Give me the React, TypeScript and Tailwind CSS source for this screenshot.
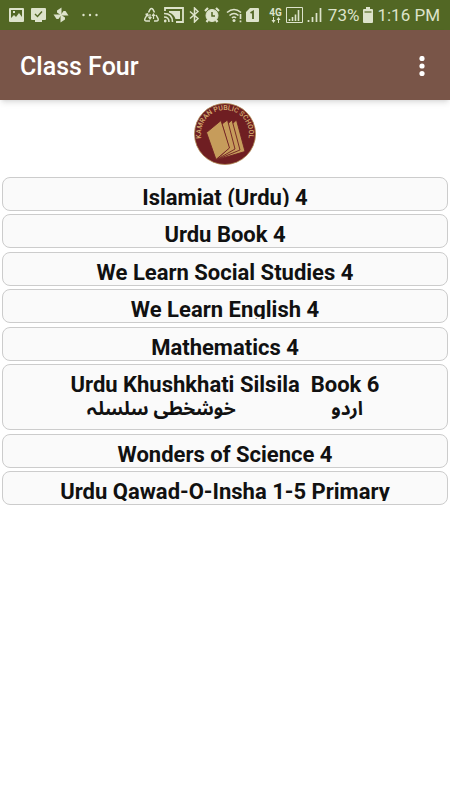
import type { ReactNode } from 'react';

interface Book {
  title: string;
  urdu?: string[];
}

const books: Book[] = [
  { title: 'Islamiat (Urdu) 4' },
  { title: 'Urdu Book 4' },
  { title: 'We Learn Social Studies 4' },
  { title: 'We Learn English 4' },
  { title: 'Mathematics 4' },
  { title: 'Urdu Khushkhati Silsila  Book 6', urdu: ['اردو', 'خوشخطی سلسلہ'] },
  { title: 'Wonders of Science 4' },
  { title: 'Urdu Qawad-O-Insha 1-5 Primary' },
];

function Icon({ width, children }: { width: number; children: ReactNode }) {
  return (
    <svg width={width} height="16" viewBox={`0 0 ${width} 16`} fill="none" stroke="currentColor" aria-hidden="true" className="shrink-0">
      {children}
    </svg>
  );
}

function StatusBar() {
  return (
    <div className="flex h-[30px] items-center justify-between bg-[#526724] pl-[9px] pr-[10px] text-[#dde3cb]">
      <div className="flex items-center gap-[7px]">
        <Icon width={15}>
          <path fill="currentColor" stroke="none" fillRule="evenodd" d="M1 1h13q1 0 1 1v12q0 1-1 1H1q-1 0-1-1V2q0-1 1-1zM2 3v8l3-3 2 2 3-4 3 4V3z" />
          <path fill="currentColor" stroke="none" d="M4 4h2v2H4z" />
        </Icon>
        <Icon width={15}>
          <path fill="currentColor" stroke="none" d="M1 1h13q1 0 1 1v10q0 1-1 1h-3v2H4v-2H1q-1 0-1-1V2q0-1 1-1z" />
          <path stroke="#526724" strokeWidth="1.4" d="M4 7l2.5 2.5L11 4.5" />
        </Icon>
        <Icon width={16}>
          <g fill="currentColor" stroke="none">
            <path d="M8.500 8V.5L4 3.500v2L7.500 8z" />
            <path d="M8 8.500h7.500L12.500 4h-2L8 7.500z" />
            <path d="M7.500 8v7.500L12 12.500v-2L8.500 8z" />
            <path d="M8 7.500H.5L3.500 12h2L8 8.500z" />
          </g>
        </Icon>
        <Icon width={26}>
          <g fill="currentColor" stroke="none">
            <circle cx="7.500" cy="8" r="1.200" />
            <circle cx="14" cy="8" r="1.200" />
            <circle cx="20.500" cy="8" r="1.200" />
          </g>
        </Icon>
      </div>

      <div className="flex items-center">
        <div className="flex items-center gap-1">
          <Icon width={17}>
            <path strokeWidth="1.500" d="M5.500 5.500L7 2.500q1.500-2 3 0l1.500 3M13 8l2 3.500q.8 2.500-1.500 2.500H11M7 14H3.500Q1 14 2 11.500L4 8M2.500 7.500L4.500 7l.8 2.500" />
            <path strokeWidth="1.200" d="M7 7v5M5.500 10L7 12l1.500-2M10.500 12V7M9 9l1.500-2L12 9" />
          </Icon>
          <Icon width={20}>
            <path strokeWidth="1.800" d="M1 4V1h18v14h-7" />
            <path fill="currentColor" stroke="none" d="M5 4h11v8h-4.500Q10 7 5 5.500z" />
            <path strokeWidth="1.600" d="M0 6.500q8.500 0 8.500 8.500M0 10q5 0 5 5" />
            <circle cx="1.200" cy="14" r="1.400" fill="currentColor" stroke="none" />
          </Icon>
          <Icon width={12}>
            <path strokeWidth="1.500" d="M2 4.500l8 7L6.500 15V1L10 4.500l-8 7" />
          </Icon>
          <Icon width={16}>
            <circle cx="8" cy="8.500" r="6" fill="currentColor" />
            <path strokeWidth="2.200" d="M1 4l3-3M15 4l-3-3M4 13l-1.500 2M12 13l1.500 2" />
            <path stroke="#526724" strokeWidth="1.500" d="M8 5v4h3" />
          </Icon>
        </div>
        <div className="ml-[6px] flex items-center gap-[3px]">
          <Icon width={17}>
            <path strokeWidth="1.600" d="M1 5.500q7-6 14 0M3.500 8.500q4.500-4 9 0M6 11q2-2 4 0" />
            <circle cx="8" cy="13.500" r="1.500" fill="currentColor" stroke="none" />
            <path strokeWidth="1.700" d="M14.500 7v5M14.500 13.500v1.800" />
          </Icon>
          <Icon width={13}>
            <path fill="currentColor" stroke="none" d="M4 1h8q1 0 1 1v12q0 1-1 1H1q-1 0-1-1V5z" />
            <path stroke="#526724" strokeWidth="1.800" d="M4.500 6L7 4.500V12" />
          </Icon>
        </div>
        <div className="ml-[10px] flex flex-col items-center">
          <span className="text-[10px] leading-[9px] font-bold">4G</span>
          <svg width="10" height="6" viewBox="0 0 10 6" fill="currentColor" aria-hidden="true">
            <path d="M2 0h1v3h1.500l-2 3-2-3H2zM7 6h1V3h1.500l-2-3-2 3H7z" />
          </svg>
        </div>
        <div className="ml-1 flex items-center gap-1">
          <Icon width={17}>
            <path d="M.5.500h16v15H.5z" />
            <path strokeWidth="1.600" d="M3.500 14v-2M6.500 14v-4M9.500 14V7.500M12.500 14V3" />
          </Icon>
          <Icon width={15}>
            <path strokeWidth="1.700" d="M1.500 15v-2M5.500 15v-5M9.500 15V6M13.500 15V1" />
          </Icon>
        </div>
        <span className="ml-[6px] text-[17px] leading-5">73%</span>
        <div className="ml-1 flex items-center">
          <Icon width={10}>
            <path fill="currentColor" stroke="none" d="M3 0h4v2h2q1 0 1 1v12q0 1-1 1H1q-1 0-1-1V3q0-1 1-1h2z" />
            <path stroke="#8c9b66" strokeWidth="2" d="M1.500 5h7" />
          </Icon>
        </div>
        <span className="ml-1 text-[17px] leading-5">1:16 PM</span>
      </div>
    </div>
  );
}

function SchoolLogo() {
  return (
    <svg width="62" height="62" viewBox="0 0 62 62" role="img" aria-label="Kamran Public School" className="mx-auto">
      <circle cx="31" cy="31" r="30.500" fill="#6f1e22" stroke="#b08a52" strokeWidth=".8" />
      <defs>
        <path id="rim" d="M10.200 43A24 24 0 1 1 51.800 43" />
      </defs>
      <text fill="#d5ad70" fontSize="7" fontWeight="500">
        <textPath href="#rim" startOffset="50%" textAnchor="middle">KAMRAN PUBLIC SCHOOL</textPath>
      </text>
      <g fill="#c69c5b" stroke="#6f1e22" strokeWidth=".9">
        <path d="M38 21l4.500-4L51 48.500 22 57l22-10z" />
        <path d="M33.500 21l4.500-4 8 30L22 57l17-12z" />
        <path d="M28 21l5.500-4L41 46 22 57l13-12z" />
        <path d="M12.500 29.500L27 17.500l8.500 27.500L22 56.500z" />
      </g>
    </svg>
  );
}

function BookRow({ book }: { book: Book }) {
  return (
    <li className="mb-[3px] even:mb-1">
      <button
        type="button"
        className="block w-full rounded-lg border border-[#cccccc] bg-[#fafafa] px-2 pt-[7px] pb-[3px] text-[22px] leading-[26px] font-bold text-[#111111]"
      >
        {book.urdu ? (
          <>
            <span className="block whitespace-pre">{book.title}</span>
            <span dir="rtl" lang="ur" className="mx-auto flex h-7 w-[276px] justify-between font-['Noto_Sans_Arabic','DejaVu_Sans',sans-serif] text-[19px] leading-[22px]">
              {book.urdu.map((part) => (
                <span key={part}>{part}</span>
              ))}
            </span>
          </>
        ) : (
          <span className="block h-[22px] overflow-hidden">{book.title}</span>
        )}
      </button>
    </li>
  );
}

export default function App() {
  return (
    <div className="min-h-screen bg-white font-[Roboto,sans-serif]">
      <StatusBar />
      <header className="flex h-[70px] items-center justify-between bg-[#795548] px-5 pt-[3px] text-white shadow-md">
        <h1 className="text-[25px] leading-8 font-medium">Class Four</h1>
        <button type="button" aria-label="More options" className="flex h-10 w-4 items-center justify-center">
          <svg width="6" height="22" viewBox="0 0 6 22" fill="currentColor" aria-hidden="true">
            <circle cx="3" cy="2.500" r="2.600" />
            <circle cx="3" cy="10" r="2.600" />
            <circle cx="3" cy="17.500" r="2.600" />
          </svg>
        </button>
      </header>
      <main className="px-[2px] pt-[3px]">
        <SchoolLogo />
        <ul className="mt-3">
          {books.map((book) => (
            <BookRow key={book.title} book={book} />
          ))}
        </ul>
      </main>
    </div>
  );
}
